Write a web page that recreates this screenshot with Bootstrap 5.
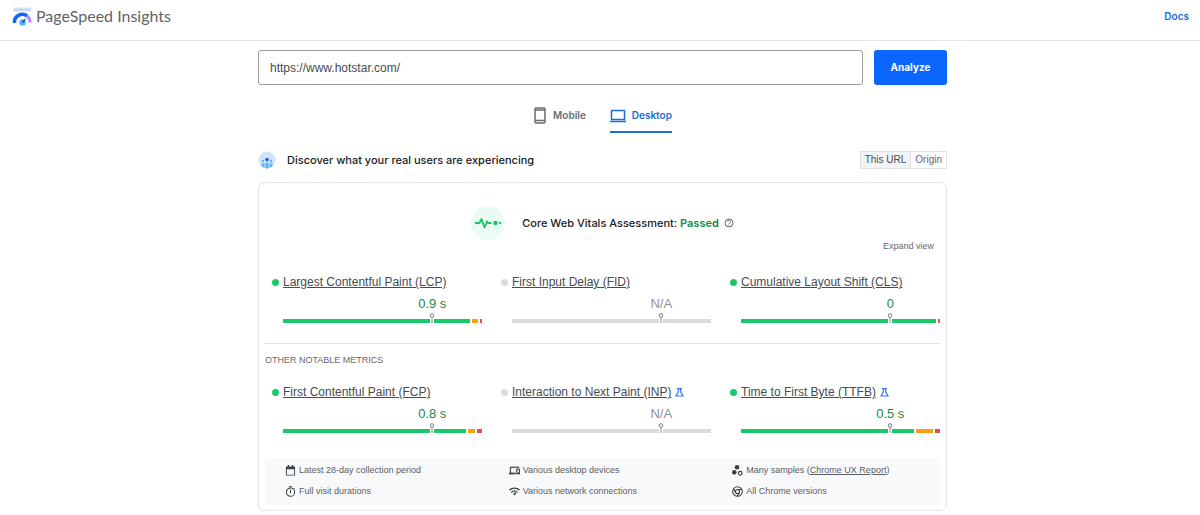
<!DOCTYPE html>
<html lang="en">
<head>
<meta charset="utf-8">
<meta name="viewport" content="width=device-width, initial-scale=1">
<title>PageSpeed Insights</title>
<link href="https://cdn.jsdelivr.net/npm/bootstrap@5.3.0/dist/css/bootstrap.min.css" rel="stylesheet">
<style>
:root { --good: #18c96b; --blue: #1a6cd6; --ink: #484b4f; }
body { font-family: "Liberation Sans", Arial, sans-serif; font-size: 12px; line-height: 16px; color: var(--ink); background: #fff; }
svg { display: block; flex: none; }
.topbar { height: 41px; padding: 0 11px 8px 12px; border-bottom: 1px solid #e3e4e6; }
.site-name { font-family: Lato, sans-serif; font-size: 16px; line-height: 20px; color: #5f6368; }
.docs-link { font-family: Inter, sans-serif; font-size: 10px; font-weight: 600; color: var(--blue); }
.page { max-width: 694px; padding-left: 5px; }
.url-form { gap: 11px; padding-top: 9px; }
.url-box { height: 35px; padding: 0 11px; font-size: 12px; color: var(--ink); border: 1px solid #9a9da1; border-radius: 3px; }
.analyze { width: 73px; height: 35px; padding: 0; font-family: Inter, sans-serif; font-size: 10px; font-weight: 700; color: #fff; background: #0a66ff; border: 0; border-radius: 3px; }
.analyze:hover { color: #fff; background: #0057e0; }
.devices { gap: 24px; margin-top: 20px; }
.device { padding: 0 0 6px; border: 0; border-bottom: 2px solid transparent; background: none; gap: 6px; font-family: Inter, sans-serif; font-size: 10px; font-weight: 600; line-height: 20px; color: #6a6e73; }
.device.active { color: var(--blue); border-color: var(--blue); }
.discover { margin-top: 17px; height: 20px; }
.discover h2 { font-size: 11px; font-family: Inter, sans-serif; line-height: 20px; margin-left: 11px; color: #202124; }
.scope { border: 1px solid #dfe1e4; }
.scope button { border: 0; background: #fff; font-size: 10px; line-height: 16px; padding: 0 4px; color: #66696d; }
.scope button.active { background: #f1f3f4; color: #4a4d51; border-right: 1px solid #dfe1e4; }
.report { margin-top: 12px; padding: 0 6px 5px; border: 1px solid #e3e4e6; border-radius: 6px; }
.assessment { padding: 23px 0 0; gap: 17px; line-height: 34px; }
.assessment h3 { font-family: Inter, sans-serif; font-size: 11px; line-height: 34px; color: #202124; }
.passed { color: #188a45; }
.help { border: 0; padding: 0; background: none; margin-left: 5px; color: #5f6368; }
.expand { border: 0; padding: 0; background: none; font-size: 9px; line-height: 12px; color: #66696d; margin-right: 6px; }
.metrics { display: grid; grid-template-columns: repeat(3, 1fr); column-gap: 12px; }
.metrics-core { padding-top: 22px; }
.metric { padding-left: 18px; }
.metric-label { gap: 4px; margin-left: -11px; line-height: 16px; }
.metric-label a { color: var(--ink); font-size: 12px; }
.dot { width: 7px; height: 7px; border-radius: 50%; background: var(--good); flex: none; }
.metric-none .dot { background: #d9dbde; }
.value { width: 50px; margin: 5px 0 0 calc(75% - 25px); text-align: center; font-size: 13px; line-height: 18px; color: #188a45; }
.metric-none .value { color: #8d9197; }
.meter { display: flex; gap: 2px; height: 4px; margin-top: 6px; position: relative; }
.meter .seg { flex: 1 1 0; background: var(--good); }
.meter .mid { background: #fa9f12; }
.meter .poor { background: #f04d42; }
.metric-none .meter .seg { background: #d9dbde; }
.pin { position: absolute; left: 75%; top: -6px; margin-left: -3px; }
.other { margin-top: 20px; padding: 8px 0 16px; border-top: 1px solid #dfe1e4; font-size: 9px; font-weight: 400; line-height: 16px; color: #66696d; }
.facts { display: grid; grid-template-columns: repeat(3, 1fr); column-gap: 16px; row-gap: 5px; margin-top: 25px; padding: 4px 0 6px 20px; background: #f8f9fb; font-size: 9px; line-height: 16px; color: #5a5d61; }
.fact { gap: 3px; }
.fact a { color: inherit; }
</style>
</head>
<body>
<header class="topbar d-flex align-items-center justify-content-between">
  <div class="d-flex align-items-center gap-1">
    <svg width="20" height="20" viewBox="0 0 20 20" fill="none">
      <path d="M1 1.500h18v4H1z" fill="#d3e3fd"/><path d="M3 3.500h1m1 0h1m2 0h1m1 0h1m2 0h1m1 0h1" stroke="#8fb9fb"/>
      <path d="M2.500 17A7.800 7.800 0 0 1 15 10" stroke="#1463f3" stroke-width="3.500"/>
      <path d="M15 10a7.800 7.800 0 0 1 3 6.500" stroke="#b58cf9" stroke-width="3.200"/>
      <circle cx="10.500" cy="16.500" r="3.200" fill="#55b5ff"/><path d="m9.500 15.500 4.500-3.500-2 5.500z" fill="#1463f3"/>
    </svg>
    <h1 class="site-name m-0 fw-normal">PageSpeed Insights</h1>
  </div>
  <a class="docs-link text-decoration-none" href="#">Docs</a>
</header>
<main class="page mx-auto">
  <form class="url-form d-flex">
    <input class="url-box form-control shadow-none" type="url" aria-label="Web page URL" value="https://www.hotstar.com/">
    <button class="analyze btn flex-shrink-0" type="button">Analyze</button>
  </form>
  <div class="devices d-flex justify-content-center" role="tablist">
    <button class="device d-flex align-items-center" type="button" role="tab" aria-selected="false">
      <svg width="14" height="18" viewBox="0 0 14 18" fill="none" stroke="currentColor"><rect x="2" y="2" width="10" height="15" rx="1" stroke-width="1.500"/><path d="M2 4h10M2 14.500h10" stroke-width="1.500"/></svg>
      <span>Mobile</span>
    </button>
    <button class="device active d-flex align-items-center" type="button" role="tab" aria-selected="true">
      <svg width="16" height="16" viewBox="0 0 16 16" fill="none" stroke="currentColor" stroke-width="1.500"><rect x="1.500" y="3.500" width="13" height="9"/><path d="M0 14.500h16"/></svg>
      <span>Desktop</span>
    </button>
  </div>
  <div class="discover d-flex align-items-center">
    <svg width="18" height="18" viewBox="0 0 18 18">
      <circle cx="9" cy="9" r="8.500" fill="#cfe2fe"/><circle cx="9" cy="8.500" r="1.800" fill="#1a62dd"/>
      <g fill="#62b0fa"><path d="M7.500 11.500h3v6h-3zM3.500 12.500h3v4.500l-3-2zM11.500 12.500h3V15l-3 2z"/><circle cx="5" cy="10" r="1.200"/><circle cx="13" cy="10" r="1.200"/></g>
    </svg>
    <h2 class="mb-0 fw-medium">Discover what your real users are experiencing</h2>
    <div class="scope d-flex ms-auto" role="group" aria-label="Data scope">
      <button class="active" type="button">This URL</button><button type="button">Origin</button>
    </div>
  </div>
  <section class="report">
    <div class="assessment d-flex justify-content-center">
      <svg width="34" height="34" viewBox="0 0 34 34" fill="none"><circle cx="17" cy="17" r="17" fill="#e9fbf2"/><path d="M4 17h4.500l2-4 3 8.500 2.500-6 1 1.500h3.500M28 17h2" stroke="#1bc46b" stroke-width="1.800" stroke-linejoin="round"/><circle cx="24.500" cy="17" r="2.200" fill="#1bc46b"/></svg>
      <div class="d-flex align-items-center">
        <h3 class="m-0 fw-medium">Core Web Vitals Assessment: <span class="passed fw-semibold">Passed</span></h3>
        <button class="help" type="button" aria-label="About the assessment"><svg width="10" height="10" viewBox="0 0 10 10" fill="none" stroke="currentColor"><circle cx="5" cy="5" r="4"/><path d="M3.500 4C3.500 2 6.500 2 6.500 4 6.500 5 5 5 5 6.200M5 6.800v.9" stroke-width=".9"/></svg></button>
      </div>
    </div>
    <div class="d-flex justify-content-end"><button class="expand" type="button">Expand view</button></div>
    <div class="metrics metrics-core">
      <div class="metric">
        <div class="metric-label d-flex align-items-center"><span class="dot"></span><a href="#">Largest Contentful Paint (LCP)</a></div>
        <div class="value">0.9 s</div>
        <div class="meter"><span class="seg" style="flex-grow:188"></span><span class="seg mid" style="flex-grow:6"></span><span class="seg poor" style="flex-grow:2"></span>
          <svg class="pin" width="6" height="10" viewBox="0 0 6 10" fill="none"><path d="M1 6h4v4H1z" fill="#fff"/><circle cx="3" cy="2.500" r="1.800" fill="#fff" stroke="#777"/><path d="M3 4.500V10" stroke="#888"/></svg></div>
      </div>
      <div class="metric metric-none">
        <div class="metric-label d-flex align-items-center"><span class="dot"></span><a href="#">First Input Delay (FID)</a></div>
        <div class="value">N/A</div>
        <div class="meter"><span class="seg"></span>
          <svg class="pin" width="6" height="10" viewBox="0 0 6 10" fill="none"><path d="M1 6h4v4H1z" fill="#fff"/><circle cx="3" cy="2.500" r="1.800" fill="#fff" stroke="#777"/><path d="M3 4.500V10" stroke="#888"/></svg></div>
      </div>
      <div class="metric">
        <div class="metric-label d-flex align-items-center"><span class="dot"></span><a href="#">Cumulative Layout Shift (CLS)</a></div>
        <div class="value">0</div>
        <div class="meter"><span class="seg" style="flex-grow:195"></span><span class="seg poor" style="flex-grow:2"></span>
          <svg class="pin" width="6" height="10" viewBox="0 0 6 10" fill="none"><path d="M1 6h4v4H1z" fill="#fff"/><circle cx="3" cy="2.500" r="1.800" fill="#fff" stroke="#777"/><path d="M3 4.500V10" stroke="#888"/></svg></div>
      </div>
    </div>
    <h4 class="other mb-0">OTHER NOTABLE METRICS</h4>
    <div class="metrics">
      <div class="metric">
        <div class="metric-label d-flex align-items-center"><span class="dot"></span><a href="#">First Contentful Paint (FCP)</a></div>
        <div class="value">0.8 s</div>
        <div class="meter"><span class="seg" style="flex-grow:183"></span><span class="seg mid" style="flex-grow:7"></span><span class="seg poor" style="flex-grow:5"></span>
          <svg class="pin" width="6" height="10" viewBox="0 0 6 10" fill="none"><path d="M1 6h4v4H1z" fill="#fff"/><circle cx="3" cy="2.500" r="1.800" fill="#fff" stroke="#777"/><path d="M3 4.500V10" stroke="#888"/></svg></div>
      </div>
      <div class="metric metric-none">
        <div class="metric-label d-flex align-items-center"><span class="dot"></span><a href="#">Interaction to Next Paint (INP)</a>
          <svg width="9" height="9" viewBox="0 0 9 9" fill="none" stroke="#3578e5" stroke-width="1.200"><path d="M2 .7h5M3.300 1v3L1 8h7L5.700 4V1"/></svg></div>
        <div class="value">N/A</div>
        <div class="meter"><span class="seg"></span>
          <svg class="pin" width="6" height="10" viewBox="0 0 6 10" fill="none"><path d="M1 6h4v4H1z" fill="#fff"/><circle cx="3" cy="2.500" r="1.800" fill="#fff" stroke="#777"/><path d="M3 4.500V10" stroke="#888"/></svg></div>
      </div>
      <div class="metric">
        <div class="metric-label d-flex align-items-center"><span class="dot"></span><a href="#">Time to First Byte (TTFB)</a>
          <svg width="9" height="9" viewBox="0 0 9 9" fill="none" stroke="#3578e5" stroke-width="1.200"><path d="M2 .7h5M3.300 1v3L1 8h7L5.700 4V1"/></svg></div>
        <div class="value">0.5 s</div>
        <div class="meter"><span class="seg" style="flex-grow:173"></span><span class="seg mid" style="flex-grow:17"></span><span class="seg poor" style="flex-grow:5"></span>
          <svg class="pin" width="6" height="10" viewBox="0 0 6 10" fill="none"><path d="M1 6h4v4H1z" fill="#fff"/><circle cx="3" cy="2.500" r="1.800" fill="#fff" stroke="#777"/><path d="M3 4.500V10" stroke="#888"/></svg></div>
      </div>
    </div>
    <div class="facts">
      <div class="fact d-flex align-items-center"><svg width="11" height="11" viewBox="0 0 24 24" fill="#3c4043"><path d="M20 3h-2V0h-3v3H9V0H6v3H4a2 2 0 0 0-2 2v16a2 2 0 0 0 2 2h16a2 2 0 0 0 2-2V5a2 2 0 0 0-2-2zm0 18H4V9h16z"/></svg><span>Latest 28-day collection period</span></div>
      <div class="fact d-flex align-items-center"><svg width="11" height="11" viewBox="0 0 24 24" fill="#3c4043"><path d="M4 6h18V4H4a2 2 0 0 0-2 2v11H0v3h14v-3H4zm19 2h-6a1 1 0 0 0-1 1v10a1 1 0 0 0 1 1h6a1 1 0 0 0 1-1V9a1 1 0 0 0-1-1zm-1 9h-4v-7h4z" stroke="#3c4043" stroke-width=".5"/></svg><span>Various desktop devices</span></div>
      <div class="fact d-flex align-items-center"><svg width="11" height="11" viewBox="0 0 24 24" fill="#3c4043"><circle cx="11" cy="5" r="5"/><circle cx="5" cy="16" r="5"/><circle cx="18" cy="18" r="4" fill="none" stroke="#3c4043" stroke-width="2.500"/></svg><span>Many samples (<a href="#">Chrome UX Report</a>)</span></div>
      <div class="fact d-flex align-items-center"><svg width="11" height="11" viewBox="0 0 24 24" fill="none" stroke="#3c4043" stroke-width="2.200"><circle cx="12" cy="13.500" r="9"/><path d="M12 8v7M8.500 1.500h7M19 5l2 2"/></svg><span>Full visit durations</span></div>
      <div class="fact d-flex align-items-center"><svg width="11" height="11" viewBox="0 0 24 24" fill="none" stroke="#3c4043" stroke-width="3"><path d="M1 9C7 3 17 3 23 9M5 14c3-3 6-4 9-3M19 14l-1-1"/><path d="m18 8-8 9c-1 2 2 5 4 2z" fill="#3c4043" stroke="none"/></svg><span>Various network connections</span></div>
      <div class="fact d-flex align-items-center"><svg width="11" height="11" viewBox="0 0 24 24" fill="none" stroke="#3c4043" stroke-width="2.300"><circle cx="12" cy="12" r="10.500"/><circle cx="12" cy="12" r="4.500"/><path d="M12 7.500h9.500M8 14.200 3.300 6M16 14.200 11.300 22.400"/></svg><span>All Chrome versions</span></div>
    </div>
  </section>
</main>
<script src="https://cdn.jsdelivr.net/npm/bootstrap@5.3.0/dist/js/bootstrap.bundle.min.js"></script>
</body>
</html>
